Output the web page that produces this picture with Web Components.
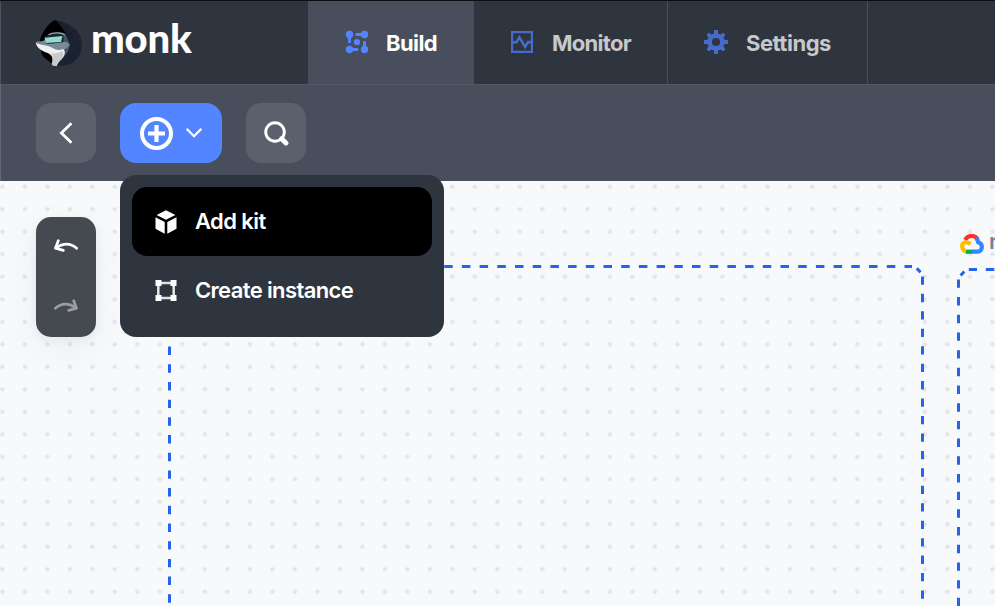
<!DOCTYPE html>
<html lang="en"><head><meta charset="utf-8"><title>monk</title>
<style>html,body{margin:0;height:100%;overflow:hidden;background:#f7f9fb}</style></head><body>
<monk-app></monk-app>
<script>
const define=(name,html,setup)=>customElements.define(name,class extends HTMLElement{
  connectedCallback(){
    if(this.shadowRoot)return;
    const t=document.createElement('template');t.innerHTML=html;
    this.attachShadow({mode:'open'}).append(t.content.cloneNode(true));
    if(setup)setup(this);
  }
});
const icons={
build:`<svg width="24" height="24" viewBox="0 0 24 24" fill="currentColor" stroke="currentColor" stroke-width="3" stroke-linecap="round"><g stroke="none"><circle cx="4.5" cy="4.5" r="3.7"/><circle cx="19.5" cy="4.5" r="3.7"/><circle cx="4.5" cy="19.5" r="3.7"/><circle cx="19.5" cy="19.5" r="3.7"/><circle cx="12" cy="12" r="3.1"/></g><path d="M4.5 4.5v7.2M19.5 4.5h-7.8M19.5 19.5v-7.2M4.5 19.5h7.4"/></svg>`,
monitor:`<svg width="22" height="22" viewBox="0 0 22 22" fill="none" stroke="currentColor" stroke-width="2.2"><path d="M1.1 1.1h19.8v19.8H1.1z"/><path d="M1 11.3h4.5l2.9-5 5.7 9.5 3.1-4.8h4" stroke-width="2.6"/></svg>`,
gear:`<svg width="24" height="24" viewBox="0 0 24 24" fill="none" stroke="currentColor"><circle cx="12" cy="12" r="6.4" stroke-width="4.6"/><g stroke-width="4"><path d="M12 0v5M12 19v5M0 12h5M19 12h5"/><path stroke-linecap="round" d="m5 5 1.800 1.800M17.200 17.200 19 19M19 5l-1.800 1.800M6.800 17.200 5 19"/></g></svg>`,
back:`<svg width="14" height="22" viewBox="0 0 14 22" fill="none" stroke="currentColor" stroke-width="2.8"><path d="M12.4 1.2 2.4 11l10 9.8"/></svg>`,
plus:`<svg width="33" height="33" viewBox="0 0 33 33" fill="none" stroke="currentColor"><circle cx="16.5" cy="16.5" r="14.5" stroke-width="4"/><path d="M16.5 8v17M8 16.5h17" stroke-width="4.2"/></svg>`,
down:`<svg width="16" height="10" viewBox="0 0 16 10" fill="none" stroke="currentColor" stroke-width="2.2"><path d="m.7.8 7.3 7.4L15.3.8"/></svg>`,
search:`<svg width="25" height="25" viewBox="0 0 25 25" fill="none" stroke="currentColor"><circle cx="11" cy="11" r="9.3" stroke-width="2.900"/><path d="m17.7 17.7 4.200 4.200" stroke-width="5" stroke-linecap="round"/></svg>`,
undo:`<svg width="24" height="13" viewBox="0 0 24 13" fill="none" stroke="currentColor" stroke-width="2.8" stroke-linecap="round" stroke-linejoin="round"><path d="M22.6 9.3C16.5 3.9 9 4 1.6 9.2M4.3 1.7 1.5 9.2l7.8 2.2"/></svg>`,
redo:`<svg width="24" height="13" viewBox="0 0 24 13" fill="none" stroke="currentColor" stroke-width="2.8" stroke-linecap="round" stroke-linejoin="round"><path d="M1.4 9.3C7.5 3.9 15 4 22.4 9.2M19.7 1.7l2.8 7.5-7.8 2.2"/></svg>`,
kit:`<svg width="22" height="24" viewBox="0 0 22 24" fill="currentColor"><path d="M11 .2 20.4 5 11 9.8 1.6 5zM.5 7.3l9.2 4.7v11.8L.5 18.7zM21.5 7.3 12.3 12v11.8l9.2-5.1z"/></svg>`,
instance:`<svg width="22" height="21" viewBox="0 0 22 21"><path d="M3.3 3h15.4v15H3.3z" fill="none" stroke="#dfe1e3" stroke-width="2.6"/><path d="M.5 0h6v6h-6zM15.5 0h6v6h-6zM.5 15h6v6h-6zM15.5 15h6v6h-6z" fill="currentColor"/></svg>`};
const placeIcon=el=>el.shadowRoot.querySelector('.icon').innerHTML=icons[el.getAttribute('icon')];

define('monk-logo',`<style>:host{display:flex;align-items:flex-start;width:307px;height:83px;box-sizing:border-box;padding:17px 0 0 35px;color:#fff}svg{flex:none;margin:1px 1px 0 -1px}span{font:900 40px/44px Lato,sans-serif;margin:-2px 0 0 7px;letter-spacing:-.2px}</style>
<svg width="48" height="50" viewBox="0 0 48 50"><path d="M19.5 1C34 3 46.7 11 46.7 26c0 12-9 21-21 21-11 0-18-9-21-23C7 14 12 6 19.5 1z" fill="#1b2230"/><path d="M19.5 1C12 6 7.5 13 5 21l1.5 14c3 5 7 7 12 10l8-18 6-12C30 8 25 3 19.5 1z" fill="#000"/><path d="M20 1c9 2 15 9 18 17l-5 3c-2-7-6-14-13-20z" fill="#181f2c"/><path d="M13 17c5-4 15-5 18-1l3.7 9.5c0 4-2 9-6.7 13l-7-9-10-8z" fill="#46546a"/><path d="M.7 23c3-1 6 0 9-2 4 3 17 2 22 2l3 2.5c-2 4-6 6-11 6-9 0-18-4-23-8.5z" fill="#778a98"/><path d="M.7 23.5c4 3 10 2 15 4.5 5 3 9 4 12 2 3 1 3 6-1 10-3 3-4 4-5 7-3 0-5-1-4-3 1-5-1-8-5-10-6-2-11-5-12-10.5z" fill="#f0eeef"/><path d="M16 34c4 1 8 0 11-2 4 5-1 9-4 11-1 1-1 3-2 4-3 0-5-1-4-3 1-4 0-7-1-10z" fill="#c9cacc"/><path d="M9 18c6-4 14-5 19.5-2v7c-4 1-12 2-18 1.5z" fill="#15282e"/><path d="m9.7 18.7 17.7-1.6-1.4 6-15.500.9z" fill="#96d9d1"/><path d="M13.5 15.7c5-3 13-2 16.500 0" fill="none" stroke="#9ba9b8" stroke-width="1.2"/></svg><span>monk</span>`);

define('nav-tab',`<style>:host{display:flex;align-items:flex-start;box-sizing:border-box;height:83px;border-right:1px solid #484e5b;color:#c7c8ca;font:700 22px/28px Inter,sans-serif;padding:29px 0 0 36px}
:host([active]){background:#484e5b;color:#fff;border-color:#2f353f00}.icon{width:24px;height:24px;display:flex;align-items:center;justify-content:center;color:#466ccb;flex:none;margin-right:18px}:host([active]) .icon{color:#5285ff;margin:0 17px 0 1px}span{white-space:nowrap;margin-top:-1px;letter-spacing:var(--track,0)}</style><div class="icon"></div><span><slot></slot></span>`,placeIcon);

define('tool-button',`<style>:host{display:flex;box-sizing:border-box;width:60px;height:60px;border-radius:15px;background:#5a606c;color:#fff;align-items:center;justify-content:center}:host([primary]){width:102px;border-radius:16px;background:#5285ff;gap:13px}div{display:flex}</style><div class="icon"></div><slot></slot>`,placeIcon);
define('down-arrow',`<style>:host{display:flex;margin-top:-1px}</style>${icons.down}`);

define('menu-item',`<style>:host{display:flex;align-items:center;box-sizing:border-box;height:69px;padding-left:23.4px;border-radius:15px;color:#fff;font:600 22px/28px Inter,sans-serif}:host([selected]){background:#000}.icon{width:22px;height:24px;display:flex;align-items:center;margin:0 18px 0 -.5px}span{white-space:nowrap;margin-top:-2px;letter-spacing:var(--track,0)}</style><div class="icon"></div><span><slot></slot></span>`,placeIcon);

define('add-menu',`<style>:host{position:absolute;left:120px;top:175px;width:324px;height:162px;box-sizing:border-box;padding:12px;border-radius:16px;background:#2f353f}</style><slot></slot>`);

define('history-controls',`<style>:host{position:absolute;left:36px;top:217px;width:60px;height:120px;box-sizing:border-box;border-radius:15px;background:#454950;box-shadow:0 12px 40px rgba(30,40,55,.05),0 3px 8px rgba(30,40,55,.06);display:flex;flex-direction:column;align-items:center;padding-top:22px;gap:47px;color:#fff}svg{display:block}.redo{color:#9b9da2}</style><div>${icons.undo}</div><div class="redo">${icons.redo}</div>`);

define('flow-canvas',`<style>:host{display:block;flex:1;position:relative;overflow:hidden;background:#f7f9fb}.plan{position:absolute;left:0;top:0}.cloud{position:absolute;left:960px;top:53px;display:flex}.cloud span{font:600 22px/22px Inter,sans-serif;color:#73809a;margin:-4px 0 0 5px}</style>
<svg class="plan" width="995" height="425" viewBox="0 181 995 425"><defs><pattern id="dots" x="-8.9" y="175.5" width="22.5" height="22.5" patternUnits="userSpaceOnUse"><circle cx="11.25" cy="11.25" r="2.3" fill="#e3e5ea"/></pattern></defs><path d="M0 181h995v425H0z" fill="url(#dots)"/><g fill="none" stroke="#2563eb" stroke-width="3" stroke-dasharray="8.4 9.29"><path d="M169.5 346.6V606"/><path d="M877.5 266.5H444" stroke-dasharray="8.5 9.2"/><path d="M886.8 266.5h8.5M904.5 266.5h7.5M916.8 268.4l3.7 3.9" stroke-dasharray="none"/><path d="M922.5 276.4V606" stroke-dasharray="8.3 9.15"/><path d="M958.5 279.4V606"/><path d="m960.6 275.5 3.7-4M968.8 269.5H977M985.8 269.5h8.5" stroke-dasharray="none"/></g></svg>
<div class="cloud"><svg width="24" height="20" viewBox="0 0 24 20" fill="none" stroke-width="4.2"><path d="M5 5.9C8.3.8 14.6.8 17.5 5" stroke="#fb302d"/><path d="M16.2 4.1C18 5.8 18 7.8 18.2 8.3c5.2 1.5 4.6 9.4-.6 9.4H12" stroke="#3186ff"/><path d="M12.3 17.7H5.5" stroke="#00b24d"/><path d="M6 17.2C1.2 16 1 9.5 4.8 8.5c2.4-.7 4.4.4 5.6 1.8" stroke="#ffbd00"/></svg><span>m</span></div>`);

define('monk-app',`<style>:host{display:flex;flex-direction:column;position:relative;width:995px;height:606px;box-sizing:border-box;overflow:hidden}header{display:flex;height:84px;box-sizing:border-box;border-top:1px solid #0e0f12;background:#2f353f;flex:none;padding-left:1px}nav{display:flex}.tools{display:flex;gap:24px;height:97px;background:#484e5b;border-top:1px solid #515764;box-sizing:border-box;padding:18px 35px;flex:none;border-left:1px solid #626874}header{box-shadow:inset 1px 0 #4d535e}</style>
<header><monk-logo></monk-logo><nav><nav-tab active icon="build" style="width:166px;--track:-.6px">Build</nav-tab><nav-tab icon="monitor" style="width:194px;--track:-.7px">Monitor</nav-tab><nav-tab icon="gear" style="width:200px;--track:-.48px">Settings</nav-tab></nav></header>
<section class="tools"><tool-button icon="back"></tool-button><tool-button primary icon="plus"><down-arrow></down-arrow></tool-button><tool-button icon="search"></tool-button></section>
<flow-canvas></flow-canvas><history-controls></history-controls>
<add-menu><menu-item selected icon="kit" style="--track:-.55px">Add kit</menu-item><menu-item icon="instance" style="--track:-.62px">Create instance</menu-item></add-menu>`);
</script></body></html>
